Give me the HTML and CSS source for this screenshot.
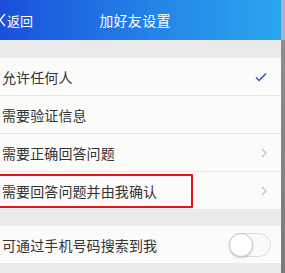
FILE: index.html
```html
<!DOCTYPE html>
<html lang="zh-CN">
<head>
    <meta charset="UTF-8">
    <meta name="viewport" content="width=device-width, initial-scale=1.0">
    <title>加好友设置</title>
    <link rel="stylesheet" href="styles.css">
</head>
<body>
    <div class="screen">
        <div class="header">
            <div class="back">
                <svg class="back-icon" width="7" height="14" viewBox="0 0 7 14">
                    <path d="M6 1 L1 7 L6 13" fill="none" stroke="#fff" stroke-width="1.4"/>
                </svg>
                <span>返回</span>
            </div>
            <div class="title">加好友设置</div>
        </div>
        <div class="gap-top"></div>
        <div class="group">
            <div class="row">
                <span class="label">允许任何人</span>
                <svg class="check" width="12" height="10" viewBox="0 0 12 10">
                    <path d="M1 5.5 L4.2 8.5 L11 1.5" fill="none" stroke="#3d4fb5" stroke-width="1.6"/>
                </svg>
            </div>
            <div class="row">
                <span class="label">需要验证信息</span>
            </div>
            <div class="row">
                <span class="label">需要正确回答问题</span>
                <svg class="chevron" width="6" height="10" viewBox="0 0 6 10">
                    <path d="M1 1 L5 5 L1 9" fill="none" stroke="#c2c2c2" stroke-width="1.2"/>
                </svg>
            </div>
            <div class="row last">
                <span class="label">需要回答问题并由我确认</span>
                <svg class="chevron" width="6" height="10" viewBox="0 0 6 10">
                    <path d="M1 1 L5 5 L1 9" fill="none" stroke="#c2c2c2" stroke-width="1.2"/>
                </svg>
                <div class="highlight"></div>
            </div>
        </div>
        <div class="gap"></div>
        <div class="group">
            <div class="row last">
                <span class="label">可通过手机号码搜索到我</span>
                <div class="toggle"><div class="knob"></div></div>
            </div>
        </div>
        <div class="gap-bottom"></div>
    </div>
    <div class="edge"></div>
</body>
</html>
```

FILE: styles.css
```css
html, body {
    margin: 0;
    padding: 0;
}
body {
    font-family: "Noto Sans CJK SC", "Noto Sans", sans-serif;
    background-color: #ebebeb;
    width: 285px;
    height: 273px;
    overflow: hidden;
    display: flex;
}
.screen {
    width: 281px;
    display: flex;
    flex-direction: column;
}
.edge {
    width: 4px;
    background: linear-gradient(to bottom, #9fb6c8 0, #9fb6c8 40px, #8d8d8d 40px, #7a7a7a 100%);
}
.header {
    height: 40px;
    background: linear-gradient(to right, #1a4fdc, #2384e6 55%, #2ba6ee);
    position: relative;
    display: flex;
    align-items: center;
    justify-content: center;
    color: #fff;
}
.back {
    position: absolute;
    left: 0;
    top: 0;
    height: 40px;
    display: flex;
    align-items: center;
    gap: 1px;
    font-size: 13px;
}
.back-icon {
    margin-left: -1px;
}
.title {
    font-size: 14px;
    letter-spacing: 0.3px;
    margin-left: -11px;
}
.gap-top {
    height: 18px;
}
.gap {
    height: 17px;
}
.gap-bottom {
    flex: 1;
}
.group {
    background-color: #fbfbf9;
}
.row {
    height: 37px;
    display: flex;
    align-items: center;
    justify-content: space-between;
    padding: 0 12px 0 2px;
    border-bottom: 1px solid #e6e6e4;
    position: relative;
}
.row.last {
    border-bottom: none;
}
.label {
    font-size: 14px;
    color: #333;
    letter-spacing: 0.1px;
}
.check {
    margin-right: 2px;
}
.chevron {
    margin-right: 2px;
}
.highlight {
    position: absolute;
    left: -3px;
    top: 2px;
    width: 192px;
    height: 30px;
    border: 2px solid #e5141c;
    border-radius: 1px;
}
.toggle {
    width: 42px;
    height: 24px;
    border: 1px solid #dcdcdc;
    border-radius: 13px;
    box-sizing: border-box;
    position: relative;
    background-color: #fafafa;
    margin-right: -2px;
}
.knob {
    position: absolute;
    left: -1px;
    top: -1px;
    width: 24px;
    height: 24px;
    border-radius: 50%;
    border: 1px solid #c8c8c8;
    box-sizing: border-box;
    background-color: #fff;
    box-shadow: 0 1px 2px rgba(0,0,0,0.2);
}
```
